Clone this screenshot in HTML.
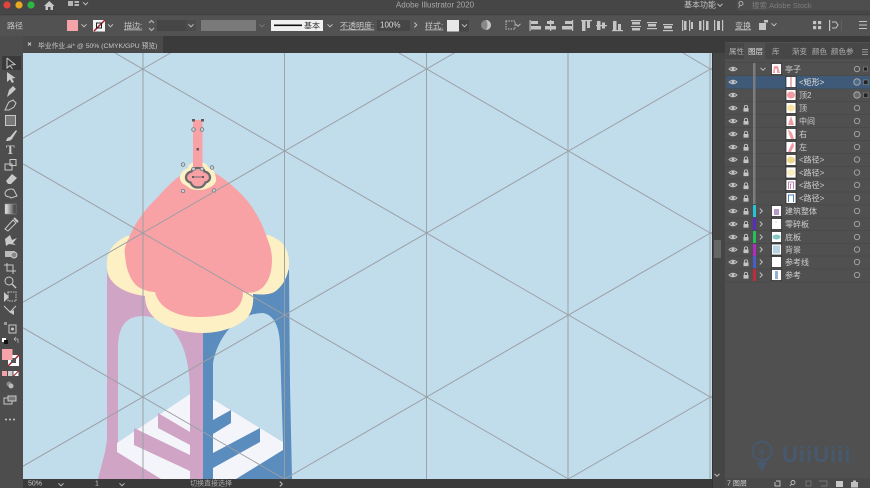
<!DOCTYPE html>
<html><head><meta charset="utf-8">
<style>
html,body{margin:0;padding:0;background:#505050;width:870px;height:488px;overflow:hidden}
#w{position:relative;width:870px;height:488px;overflow:hidden}
svg{display:block}
text{font-family:"Liberation Sans","Noto Sans CJK SC",sans-serif;fill:#c8c8c8;font-size:8px}
.b{filter:blur(.35px)}
.fl{fill:#c4c4c4}
</style></head><body><div id="w">
<svg width="870" height="488" viewBox="0 0 870 488" xmlns="http://www.w3.org/2000/svg">
<defs>
<g id="eye"><path d="M-4 0Q0 -3.6 4 0Q0 3.6 -4 0Z" fill="none" stroke="#c4c4c4" stroke-width=".9"/><circle r="1.5" fill="#c4c4c4"/></g>
<g id="lock"><rect x="-2.5" y="-.5" width="5" height="3.6" fill="#c4c4c4"/><path d="M-1.6 -.5V-1.6A1.6 1.6 0 0 1 1.6 -1.6V-.5" fill="none" stroke="#c4c4c4" stroke-width=".9"/></g>
<circle id="tg" r="2.7" fill="none" stroke="#a8a8a8" stroke-width=".9"/>
<path id="ch" d="M-2.5 -1.2L0 1.3L2.5 -1.2" fill="none" stroke="#c0c0c0" stroke-width="1"/>
<path id="cr" d="M-1.2 -2.5L1.3 0L-1.2 2.5" fill="none" stroke="#c0c0c0" stroke-width="1"/>
<circle id="h" r="1.8" fill="#c1d0da" stroke="#666" stroke-width=".7"/>
<linearGradient id="gr"><stop offset="0" stop-color="#eee"/><stop offset="1" stop-color="#333"/></linearGradient>
</defs>
<g class="b">
<!-- chrome -->
<rect width="870" height="15" fill="#464646"/>
<rect y="15" width="870" height="21" fill="#525252"/>
<rect y="14.5" width="870" height=".7" fill="#3a3a3a"/>
<rect y="36" width="870" height="18" fill="#3b3b3b"/>
<rect x="0" y="36" width="23" height="452" fill="#4d4d4d"/>
<rect x="23" y="36" width="140" height="17" fill="#4a4a4a"/>
<rect x="712" y="53" width="13" height="435" fill="#454545"/>
<rect x="725" y="36" width="145" height="452" fill="#505050"/>
<rect x="725" y="36" width="145" height="6" fill="#3b3b3b"/>
<rect x="744" y="43" width="21" height="16" fill="#505050"/>
<rect x="725" y="43" width="19" height="16" fill="#474747"/>
<rect x="765" y="43" width="105" height="16" fill="#474747"/>
<rect x="714" y="240" width="7" height="18" fill="#666"/>

<!-- title bar -->
<circle cx="7" cy="5" r="3.6" fill="#e0443e"/><circle cx="19" cy="5" r="3.6" fill="#e8a81f"/><circle cx="31" cy="5" r="3.6" fill="#2cb742"/>
<path d="M44 6L49.3 1L54.5 6H53V10H50.5V7H48V10H45.5V6Z" fill="#c8c8c8"/>
<path d="M68 1H73V6H68ZM74.500 1H79V3H74.500ZM74.500 4H79V6H74.500Z" fill="#b5b5b5"/>
<use href="#ch" x="85.500" y="3.500"/>
<text x="435" y="7.500" text-anchor="middle" style="font-size:8px;fill:#a8a8a8">Adobe Illustrator 2020</text>
<text x="684" y="7.500" style="font-size:8px;fill:#c4c4c4">基本功能</text>
<use href="#ch" x="720" y="5"/>
<rect x="737" y="0" width="133" height="10.500" fill="#4e4e4e"/>
<circle cx="741" cy="3.500" r="2" fill="none" stroke="#aaa"/><path d="M740 5.500L738.500 7.500" stroke="#aaa"/>
<text x="752" y="8" style="font-size:7.500px;fill:#7d7d7d">搜索 Adobe Stock</text>

<!-- control bar -->
<text x="7" y="28.500" style="font-size:8px">路径</text>
<rect x="67" y="20" width="11" height="11" fill="#f4a3a9"/>
<use href="#ch" x="84" y="25.500"/>
<rect x="93" y="20" width="12" height="11.500" fill="#f5f5f5"/><path d="M94 31L105 20" stroke="#b01c2e" stroke-width="1.500"/><rect x="96.500" y="23" width="5" height="5" fill="none" stroke="#222" stroke-width="1"/>
<use href="#ch" x="110.500" y="25.500"/>
<text x="124" y="28.500" style="font-size:8px;text-decoration:underline">描边:</text>
<path d="M149 23L151.500 20.500L154 23M149 28L151.500 30.500L154 28" fill="none" stroke="#bbb"/>
<rect x="157" y="20" width="29" height="11" fill="#464646"/>
<rect x="186" y="20" width="10" height="11" fill="#4c4c4c"/><use href="#ch" x="191" y="25.500"/>
<rect x="201" y="20" width="55" height="11" fill="#7a7a7a"/>
<use href="#ch" x="262" y="25.500" opacity=".35"/>
<rect x="271" y="20" width="52" height="11" fill="#f0f0f0"/>
<rect x="274" y="24.500" width="28" height="1.600" fill="#111"/>
<text x="304" y="28.500" style="font-size:8px;fill:#333">基本</text>
<use href="#ch" x="330" y="25.500"/>
<text x="340" y="28.500" style="font-size:8px;text-decoration:underline">不透明度:</text>
<rect x="377" y="20" width="33" height="11" fill="#464646"/>
<text x="380" y="27.500" style="font-size:8px;fill:#dcdcdc">100%</text>
<use href="#cr" x="415.500" y="25"/>
<text x="425" y="28.500" style="font-size:8px;text-decoration:underline">样式:</text>
<rect x="447" y="20" width="12" height="11.500" fill="#e8e8e8"/>
<rect x="459" y="20" width="10" height="11.500" fill="#464646"/><use href="#ch" x="464.500" y="25.500"/>
<circle cx="486" cy="25" r="5" fill="#888"/><path d="M486 20A5 5 0 0 1 491 25A5 5 0 0 1 486 30Q489 25 486 20Z" fill="#c5c5c5"/>
<rect x="506" y="21" width="9" height="8" fill="none" stroke="#bdbdbd" stroke-width="1" stroke-dasharray="1.500 1"/>
<use href="#ch" x="518" y="25"/>
<g class="fl">
<rect x="529.500" y="20" width="1.200" height="11"/><rect x="531" y="21" width="7" height="3"/><rect x="531" y="26" width="10" height="3.500"/>
<rect x="550" y="20" width="1.200" height="11"/><rect x="547" y="21" width="7" height="3"/><rect x="545" y="26" width="11" height="3.500"/>
<rect x="572" y="20" width="1.200" height="11"/><rect x="565" y="21" width="7" height="3"/><rect x="562" y="26" width="10" height="3.500"/>
<rect x="581" y="20" width="11" height="1.200"/><rect x="582" y="21" width="3.500" height="10"/><rect x="587" y="21" width="3" height="7"/>
<rect x="596" y="25" width="11" height="1.200"/><rect x="597" y="21" width="3.500" height="9"/><rect x="602" y="22.500" width="3" height="6"/>
<rect x="612" y="30" width="11" height="1.200"/><rect x="613" y="21" width="3.500" height="9"/><rect x="618" y="24" width="3" height="6"/>
<rect x="631" y="20" width="10" height="1.200"/><rect x="632" y="22" width="8" height="2.500"/><rect x="631" y="26" width="10" height="1"/><rect x="632" y="28" width="8" height="2.500"/>
<rect x="647" y="22" width="10" height="1.200"/><rect x="648" y="24" width="8" height="2.500"/><rect x="647" y="28" width="10" height="1.200"/>
<rect x="663" y="24" width="10" height="1.200"/><rect x="664" y="26" width="8" height="2.500"/><rect x="663" y="30" width="10" height="1.200"/>
<rect x="682" y="20" width="1.200" height="11"/><rect x="684" y="21" width="2.500" height="9"/><rect x="689" y="20" width="1.200" height="11"/><rect x="691" y="22" width="2" height="7"/>
<rect x="699" y="21" width="2.500" height="9"/><rect x="703" y="20" width="1.200" height="11"/><rect x="706" y="21" width="2.500" height="9"/>
<rect x="714" y="20" width="1.200" height="11"/><rect x="717" y="21" width="3" height="9"/><rect x="722" y="20" width="1.200" height="11"/>
<rect x="759" y="23" width="7" height="7"/><rect x="764" y="20" width="4" height="2.500"/>
<rect x="813" y="21" width="3.200" height="3.200"/><rect x="818" y="21" width="3.200" height="3.200"/><rect x="813" y="26" width="3.200" height="3.200"/><rect x="818" y="26" width="3.200" height="3.200"/>
<rect x="829" y="20" width="1.200" height="11"/>
<rect x="859" y="21" width="8" height="1"/><rect x="859" y="24.500" width="8" height="1"/><rect x="859" y="28" width="8" height="1"/>
</g>
<path d="M832 22H836L838 25L836 28H832" fill="none" stroke="#c4c4c4"/>
<text x="735" y="28.500" style="font-size:8px;text-decoration:underline">变换</text>
<use href="#ch" x="774" y="24.500"/>
<rect x="841" y="20" width=".7" height="11" fill="#666"/>

<!-- tab bar -->
<path d="M28 42.500L31 45.500M31 42.500L28 45.500" stroke="#c8c8c8"/>
<text x="38" y="48" style="font-size:6.800px;fill:#c8c8c8">毕业作业.ai* @ 50% (CMYK/GPU 预览)</text>

<!-- canvas -->
<svg x="23" y="53" width="689" height="426" viewBox="23 53 689 426">
<rect x="23" y="53" width="689" height="426" fill="#c1dcea"/>
<path d="M107 260V440L105 452L98 479H203V270H120Z" fill="#d0a4c5"/>
<path d="M203 270H289L290 385L292 479H203Z" fill="#5a8cbd"/>
<path d="M118 443V345Q119 317 141 316Q160 316 173 330Q190 350 190 394L117 443Z" fill="#c1dcea"/>
<path d="M213 399V363Q216 345 228 330Q245 313 263 313Q279 316 280 345L283 442Z" fill="#c1dcea"/>
<path d="M190 394L117 443V452L161 479H190Z" fill="#f4f5fa"/>
<path d="M213 399L283 442V450L236 479H213Z" fill="#f4f5fa"/>
<path d="M158 413L190 432V445L158 428Z" fill="#d0a4c5"/>
<path d="M134 428L190 455V471L134 445Z" fill="#d0a4c5"/>
<path d="M213 420L231 410V423L213 434Z" fill="#5a8cbd"/>
<path d="M213 453L260 428V442L213 468Z" fill="#5a8cbd"/>
<rect x="190" y="385" width="13" height="94" fill="#d0a4c5"/>
<rect x="203" y="385" width="10" height="94" fill="#5a8cbd"/>
<!-- cream -->
<path d="M127 236C118 240 108 248 107 260C106 270 108 277 112 281C116 287 128 294 145 296C145 303 147 312 157 320C165 327 185 333 203 333C220 333 238 327 247 318C252 312 254 303 253 294C262 295 272 295 277 290C285 283 289 273 289 263C289 252 285 245 280 241C275 238 272 236 268 235Z" fill="#fdf0c4"/>
<!-- pink dome -->
<path d="M198 168C186 168 170 183 157 198C148 206 135 222 129 238C125 245 124 250 125 255C126 270 131 283 140 288C146 291 151 292 155 292C157 300 162 307 173 312C182 316 190 317 200 317C212 317 226 315 232 312C240 307 243 300 243 292C250 294 259 292 264 286C270 279 272 270 272 260C272 250 269 243 267 238C262 222 252 204 240 193C228 181 212 168 198 168Z" fill="#f8a2a6"/>
<!-- finial -->
<path d="M198 162C191 162 188 165 188 168C182 170 179 175 180 179C181 183 184 185 187 186C191 191 203 191 208 188C213 186 217 183 216 178C215 172 213 169 208 167C207 164 204 162 198 162Z" fill="#fdf0c4"/>
<rect x="193" y="120" width="9.500" height="50" fill="#f8a2a6"/>
<path d="M198 168C194 168 192 169 191.500 171.500C188 172 186 175 186 177.500C186 180 188 182 190.500 182.500C192 186 194 187.500 198 187.500C202 187.500 204 186 205.500 182.500C208 182 210 180 210 177.500C210 175 208 172 204.500 171.500C204 169 202 168 198 168Z" fill="#f8a2a6" stroke="#6a6a6e" stroke-width="2.300"/>
<path d="M193 177H203" stroke="#6a6a6e" stroke-width=".9"/>
<g fill="#5e5e62"><rect x="192" y="119" width="3" height="2.500"/><rect x="201" y="119" width="3" height="2.500"/><rect x="196.500" y="148" width="2.500" height="2.500"/><rect x="192" y="176" width="2" height="2"/><rect x="202" y="176" width="2" height="2"/></g>
<use href="#h" x="193.500" y="129.500"/><use href="#h" x="202" y="129.500"/>
<use href="#h" x="183" y="164.500"/><use href="#h" x="212" y="167.500"/><use href="#h" x="193.500" y="169"/><use href="#h" x="202" y="169"/>
<use href="#h" x="183" y="191"/><use href="#h" x="214" y="190.500"/>
<!-- grid -->
<g stroke="#9a9fa4" stroke-width=".95" fill="none">
<path d="M143 53V479M284.500 53V479M426.500 53V479M568 53V479M710 53V479"/>
<path d="M683 53L712 70M399 53L712 234M115 53L712 398M23 163.800L568.500 479M23 327.800L284.400 479"/>
<path d="M23 138.200L170.500 53M23 302.200L454.300 53M23 466.200L712 68.100M284.700 479L712 232.100M568.500 479L712 396.100"/>
</g>
</svg>
<rect x="712" y="53" width="1" height="435" fill="#333"/>

<!-- status bar -->
<rect x="23" y="479" width="689" height="9" fill="#3b3b3b"/>
<text x="28" y="485.500" style="font-size:7px">50%</text>
<use href="#ch" x="61" y="484.500"/>
<text x="95" y="485.500" style="font-size:7px">1</text>
<use href="#ch" x="122" y="484.500"/>
<text x="190" y="485.500" style="font-size:7px;fill:#aaa">切换直接选择</text>
<use href="#cr" x="281" y="484"/>
<use href="#ch" x="717" y="475"/>

<!-- toolbar icons -->
<rect x="2" y="56" width="19" height="14" fill="#3a3a3a"/>
<path d="M7 58V68L10 65.500L12.500 69M7 58L15 64.500L11 65" fill="none" stroke="#c8c8c8"/>
<path d="M7 72V82L10 79.500L12 83L14 82L12 78.500L15.500 78Z" fill="#c8c8c8"/>
<path d="M7 97L9 90L13 86L16 89L12 93Z" fill="#c8c8c8"/>
<path d="M5 110C7 106 8 103 9 102L13 100L16 103L14 107L9 110Z" fill="none" stroke="#c8c8c8"/>
<rect x="5.500" y="115.500" width="10" height="10" fill="#777" stroke="#c8c8c8"/>
<path d="M6 141C7 138 8 137 10 137L16 130L17 131L12 139C11 141 8 141 6 141Z" fill="#c8c8c8"/>
<text x="6" y="154" style="font-family:'Liberation Serif',serif;font-size:13px;fill:#c8c8c8;font-weight:bold">T</text>
<rect x="5" y="164" width="7" height="6" fill="none" stroke="#c8c8c8"/><rect x="10" y="159.500" width="6" height="6" fill="none" stroke="#c8c8c8"/>
<path d="M6 181L12 174L17 178L11 184H8Z" fill="#c8c8c8"/>
<path d="M5 193C6 189 12 188 14 190L17 196L11 198L10 197C7 197 5 196 5 193Z" fill="none" stroke="#c8c8c8"/>
<rect x="5" y="204" width="11" height="10" fill="url(#gr)" stroke="#999" stroke-width=".5"/>
<path d="M5 229L13 220L16 223L8 231Z" fill="none" stroke="#c8c8c8"/><path d="M14 218L18 222" stroke="#c8c8c8" stroke-width="2"/>
<path d="M5 239L10 235L12 240L17 238L13 243L16 245L9 244L6 246Z" fill="#c8c8c8"/>
<path d="M5 251H15V257H5Z" fill="#bbb"/><circle cx="14" cy="255" r="3" fill="#888" stroke="#ccc"/>
<path d="M7 263V271H16M4 265H13V274" fill="none" stroke="#c8c8c8"/>
<circle cx="9" cy="281" r="4" fill="none" stroke="#c8c8c8"/><path d="M12 284L16 288" stroke="#c8c8c8" stroke-width="1.500"/>
<path d="M4 292V302L9 297Z" fill="#c8c8c8"/><rect x="8" y="292" width="8" height="9" fill="none" stroke="#c8c8c8" stroke-dasharray="1.500 1"/>
<path d="M4 306L10 312L16 306" fill="none" stroke="#c8c8c8"/><path d="M9 312L14 310V315Z" fill="#c8c8c8"/>
<rect x="9" y="325" width="7" height="8" fill="none" stroke="#c8c8c8"/><circle cx="12.500" cy="329" r="1.500" fill="#c8c8c8"/>
<rect x="4" y="322" width="3" height="3" fill="#999"/>
<rect x="2" y="338" width="4" height="4" fill="#fff"/><rect x="4" y="340" width="4" height="4" fill="#111"/>
<path d="M14 339H18V343M14 339L16 337M14 339L16 341" fill="none" stroke="#bbb" stroke-width=".8"/>
<rect x="8" y="355" width="11" height="11" fill="#fff"/><path d="M8 366L19 355" stroke="#b01c2e" stroke-width="1.500"/><rect x="11" y="358" width="5" height="5" fill="#555"/>
<rect x="2" y="349" width="10.500" height="11" fill="#f4a3a9"/>
<rect x="2" y="371" width="5" height="5" fill="#f4a3a9"/><rect x="8" y="371" width="4.500" height="5" fill="#ccc"/><rect x="13.500" y="371" width="5" height="5" fill="#fff"/><path d="M13.500 376L18.500 371" stroke="#b01c2e"/>
<circle cx="9" cy="384" r="2.500" fill="#888"/><circle cx="11" cy="386" r="2.500" fill="#bbb"/>
<rect x="4" y="398" width="8" height="6" fill="none" stroke="#c8c8c8"/><rect x="8" y="396" width="8" height="5" fill="#777" stroke="#c8c8c8"/>
<circle cx="6" cy="419.500" r="1" fill="#c8c8c8"/><circle cx="10" cy="419.500" r="1" fill="#c8c8c8"/><circle cx="14" cy="419.500" r="1" fill="#c8c8c8"/>

<!-- panel tabs -->
<text x="729" y="54" style="font-size:7.500px;fill:#b0b0b0">属性</text>
<text x="748" y="54" style="font-size:7.500px;fill:#e0e0e0">图层</text>
<text x="772" y="54" style="font-size:7.500px;fill:#b0b0b0">库</text>
<text x="792" y="54" style="font-size:7.500px;fill:#b0b0b0">渐变</text>
<text x="812" y="54" style="font-size:7.500px;fill:#b0b0b0">颜色</text>
<text x="831" y="54" style="font-size:7.500px;fill:#b0b0b0">颜色参</text>
<path d="M862 49.500H868M862 52H868M862 54.500H868" stroke="#b0b0b0" stroke-width=".8"/>

<!-- layers -->
<rect x="727" y="76" width="143" height="13" fill="#3f5a78"/>
<path d="M725 62.500H870M725 75.500H870M725 88.500H870M725 101.500H870M725 114.500H870M725 127.500H870M725 140.500H870M725 153.500H870M725 166.500H870M725 179H870M725 192H870M725 205H870M725 218H870M725 230.500H870M725 243.500H870M725 256H870M725 269H870M725 282H870" stroke="#3a3a3a" stroke-width=".5" opacity=".55"/>
<use href="#eye" x="733" y="69"/><use href="#eye" x="733" y="82"/><use href="#eye" x="733" y="95"/><use href="#eye" x="733" y="108"/><use href="#eye" x="733" y="121"/><use href="#eye" x="733" y="134"/><use href="#eye" x="733" y="147"/><use href="#eye" x="733" y="159.500"/><use href="#eye" x="733" y="172.500"/><use href="#eye" x="733" y="185"/><use href="#eye" x="733" y="198"/><use href="#eye" x="733" y="211"/><use href="#eye" x="733" y="224"/><use href="#eye" x="733" y="237"/><use href="#eye" x="733" y="249.500"/><use href="#eye" x="733" y="262"/><use href="#eye" x="733" y="275"/>
<use href="#lock" x="746" y="108.500"/><use href="#lock" x="746" y="121.500"/><use href="#lock" x="746" y="134.500"/><use href="#lock" x="746" y="147.500"/><use href="#lock" x="746" y="160"/><use href="#lock" x="746" y="173"/><use href="#lock" x="746" y="186"/><use href="#lock" x="746" y="198.500"/><use href="#lock" x="746" y="211.500"/><use href="#lock" x="746" y="224.500"/><use href="#lock" x="746" y="237.500"/><use href="#lock" x="746" y="250"/><use href="#lock" x="746" y="263"/><use href="#lock" x="746" y="275.500"/>
<rect x="753" y="63" width="2.500" height="141" fill="#7c7c7c"/>
<rect x="753" y="205" width="3" height="12" fill="#25c5d8"/>
<rect x="753" y="218" width="3" height="12" fill="#5a2dc0"/>
<rect x="753" y="231" width="3" height="12" fill="#25c05a"/>
<rect x="753" y="244" width="3" height="12" fill="#b32bc0"/>
<rect x="753" y="256" width="3" height="12" fill="#4a5ec8"/>
<rect x="753" y="269" width="3" height="12" fill="#c32a3a"/>
<use href="#ch" x="763" y="69"/>
<use href="#cr" x="761" y="211"/><use href="#cr" x="761" y="224"/><use href="#cr" x="761" y="237"/><use href="#cr" x="761" y="249.500"/><use href="#cr" x="761" y="262"/><use href="#cr" x="761" y="275"/>
<g fill="#fff" stroke="#222" stroke-width=".7">
<rect x="771.500" y="63.500" width="10" height="11"/>
<rect x="786" y="76.500" width="10" height="11"/><rect x="786" y="89.500" width="10" height="11"/><rect x="786" y="102.500" width="10" height="11"/><rect x="786" y="115.500" width="10" height="11"/><rect x="786" y="128.500" width="10" height="11"/><rect x="786" y="141.500" width="10" height="11"/><rect x="786" y="154.500" width="10" height="11"/><rect x="786" y="167" width="10" height="11"/><rect x="786" y="179.500" width="10" height="11"/><rect x="786" y="192.500" width="10" height="11"/>
<rect x="771.500" y="205.500" width="10" height="11"/><rect x="771.500" y="218.500" width="10" height="11"/><rect x="771.500" y="231.500" width="10" height="11"/><rect x="771.500" y="244" width="10" height="11"/><rect x="771.500" y="256.500" width="10" height="11"/><rect x="771.500" y="269.500" width="10" height="11"/>
</g>
<path d="M774 66H778L780 73H777V69H775V73H773Z" fill="#f0a0a8"/>
<rect x="790.500" y="77" width="1" height="10" fill="#e06070"/>
<ellipse cx="791" cy="95" rx="4" ry="3.500" fill="#f29aa2"/>
<ellipse cx="791" cy="108" rx="3.800" ry="3.500" fill="#f8e5a6"/>
<path d="M791 116L794 125H788Z" fill="#f29aa2"/>
<path d="M788 129L792 133L794 139H791L789 134Z" fill="#f29aa2"/>
<path d="M793 142L790 147L788 152H791L794 146Z" fill="#f29aa2"/>
<ellipse cx="791" cy="160" rx="4" ry="3.500" fill="#edd790"/>
<ellipse cx="791" cy="172.500" rx="4" ry="3.500" fill="#fbeec2"/>
<path d="M788.500 189V182H793.500V189M790.500 189V184H791.500" fill="none" stroke="#b06aa0" stroke-width=".8"/>
<path d="M788.500 202V195H793.500V202" fill="none" stroke="#4a80b8" stroke-width="1"/>
<path d="M774 209H779V215H774Z" fill="#b89ac6"/>
<path d="M775 222L777 222" stroke="#cde"/>
<ellipse cx="776.500" cy="237" rx="4" ry="2.500" fill="#86c8c8"/>
<rect x="773" y="245.500" width="7" height="8" fill="#b8d4e4"/>
<path d="M775 271H778V279H775Z" fill="#92aed0"/>
<text x="785" y="72" style="font-size:8px;fill:#d0d0d0">亭子</text>
<text x="799" y="85" style="font-size:8px;fill:#e4e4e4">&lt;矩形&gt;</text>
<text x="799" y="98" style="font-size:8px;fill:#d0d0d0">顶2</text>
<text x="799" y="111" style="font-size:8px;fill:#d0d0d0">顶</text>
<text x="799" y="124" style="font-size:8px;fill:#d0d0d0">中间</text>
<text x="799" y="137" style="font-size:8px;fill:#d0d0d0">右</text>
<text x="799" y="150" style="font-size:8px;fill:#d0d0d0">左</text>
<text x="799" y="162.500" style="font-size:8px;fill:#d0d0d0">&lt;路径&gt;</text>
<text x="799" y="175.500" style="font-size:8px;fill:#d0d0d0">&lt;路径&gt;</text>
<text x="799" y="188" style="font-size:8px;fill:#d0d0d0">&lt;路径&gt;</text>
<text x="799" y="201" style="font-size:8px;fill:#d0d0d0">&lt;路径&gt;</text>
<text x="785" y="214" style="font-size:8px;fill:#d0d0d0">建筑整体</text>
<text x="785" y="227" style="font-size:8px;fill:#d0d0d0">零碎板</text>
<text x="785" y="240" style="font-size:8px;fill:#d0d0d0">底板</text>
<text x="785" y="252.500" style="font-size:8px;fill:#d0d0d0">背景</text>
<text x="785" y="265" style="font-size:8px;fill:#d0d0d0">参考线</text>
<text x="785" y="278" style="font-size:8px;fill:#d0d0d0">参考</text>
<use href="#tg" x="857" y="69"/><use href="#tg" x="857" y="108"/><use href="#tg" x="857" y="121"/><use href="#tg" x="857" y="134"/><use href="#tg" x="857" y="147"/><use href="#tg" x="857" y="159.500"/><use href="#tg" x="857" y="172.500"/><use href="#tg" x="857" y="185"/><use href="#tg" x="857" y="198"/><use href="#tg" x="857" y="211"/><use href="#tg" x="857" y="224"/><use href="#tg" x="857" y="237"/><use href="#tg" x="857" y="249.500"/><use href="#tg" x="857" y="262"/><use href="#tg" x="857" y="275"/>
<circle cx="857" cy="82" r="3.200" fill="#4a6a8a" stroke="#a8a8a8"/><circle cx="857" cy="95" r="3.200" fill="#6a6a6a" stroke="#a8a8a8"/>
<rect x="863.500" y="67" width="4" height="4" fill="#222" stroke="#999" stroke-width=".5"/>
<rect x="863.500" y="80" width="4.500" height="4.500" fill="#222" stroke="#999" stroke-width=".5"/>
<rect x="863.500" y="93" width="4.500" height="4.500" fill="#222" stroke="#999" stroke-width=".5"/>

<!-- watermark -->
<g opacity=".55">
<circle cx="762" cy="451" r="9.500" fill="none" stroke="#3f6188" stroke-width="2"/>
<path d="M762 446V460M759 450L762 454L765 450" fill="none" stroke="#3f6188" stroke-width="1.200"/>
<path d="M757 462H767L762 472Z" fill="#3f6188"/>
<text x="782" y="462" style="font-size:22px;fill:#3f6188;font-weight:bold;letter-spacing:1px;font-family:'Liberation Sans',sans-serif">UiiUiii</text>
</g>
<!-- bottom of panel -->
<rect x="725" y="478" width="145" height="10" fill="#4a4a4a"/>
<text x="727" y="485.500" style="font-size:7px;fill:#d0d0d0">7 图层</text>
<path d="M776 481H780V486H775V482" fill="none" stroke="#c0c0c0" stroke-width=".9"/>
<circle cx="793" cy="482.500" r="2" fill="none" stroke="#c0c0c0" stroke-width=".9"/><path d="M791.500 484L790 486" stroke="#c0c0c0" stroke-width=".9"/>
<rect x="806" y="481" width="5" height="5" fill="none" stroke="#777" stroke-width=".9"/><path d="M819 481H827V486H821" fill="none" stroke="#777" stroke-width=".9"/>
<rect x="836" y="481" width="7" height="6" fill="#c8c8c8"/>
<path d="M851 482H858V487.500H851ZM853 482V480.500H856V482" fill="#c0c0c0"/>
</g>
</svg>
</div></body></html>
